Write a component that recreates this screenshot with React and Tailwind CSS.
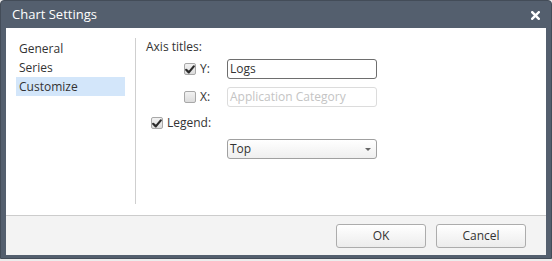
import React from 'react';

// Petite case à cocher grise, comme dans la maquette
function Check({ checked }) {
  return (
    <span className="w-[12px] h-[12px] rounded-[2px] border border-[#a8a8a8] bg-gradient-to-b from-[#f2f2f2] to-[#dcdcdc] flex items-center justify-center shrink-0">
      {checked && (
        <svg width="10" height="9" viewBox="0 0 10 9">
          <path d="M1.2 4.8 L3.8 7.4 L8.8 1.4" fill="none" stroke="#2b2b2b" strokeWidth="2.2" strokeLinecap="round" strokeLinejoin="round" />
        </svg>
      )}
    </span>
  );
}

function App() {
  const menu = ['General', 'Series', 'Customize'];

  return (
    <div className="w-[552px] h-[261px] bg-[#ececec] font-['Open_Sans',sans-serif] text-[12px] text-[#333]">
      <div className="w-[552px] h-[259px] bg-[#545f6e] border border-[#434c58] rounded-t-[4px] px-[5px] pb-[3px] flex flex-col">
        {/* --- BARRE DE TITRE --- */}
        <div className="h-[27px] flex items-center justify-between pl-[6px] pr-[6px] shrink-0">
          <span className="text-[13px] text-white leading-none">Chart Settings</span>
          <svg width="9" height="9" viewBox="0 0 9 9" className="mt-[1px]">
            <path d="M1.2 1.2 L7.8 7.8 M7.8 1.2 L1.2 7.8" stroke="#fff" strokeWidth="2.4" strokeLinecap="square" />
          </svg>
        </div>

        {/* --- CONTENU --- */}
        <div className="flex-1 bg-white flex flex-col">
          <div className="h-[187px] flex px-[10px] pt-[10px] pb-[11px]">
            <div className="w-[109px] pt-[1px] shrink-0">
              {menu.map((m) => (
                <div
                  key={m}
                  className={`h-[19px] leading-[19px] pl-[3px] ${m === 'Customize' ? 'bg-[#d3e6fa]' : ''}`}
                >
                  {m}
                </div>
              ))}
            </div>
            <div className="ml-[10px] border-l border-[#cfcfcf] pl-[10px] flex flex-col">
              <div className="h-[17px] leading-[17px]">Axis titles:</div>

              <div className="mt-[4px] h-[20px] flex items-center">
                <div className="w-[81px] flex items-center pl-[38px]">
                  <Check checked />
                  <span className="ml-[4px]">Y:</span>
                </div>
                <div className="w-[150px] h-[20px] border border-[#6e6e6e] rounded-[3px] px-[2px] leading-[18px]">
                  Logs
                </div>
              </div>

              <div className="mt-[8px] h-[20px] flex items-center">
                <div className="w-[81px] flex items-center pl-[38px]">
                  <Check />
                  <span className="ml-[4px]">X:</span>
                </div>
                <div className="w-[150px] h-[20px] border border-[#dcdcdc] rounded-[3px] px-[2px] leading-[18px] text-[#c4c4c4]">
                  Application Category
                </div>
              </div>

              <div className="mt-[6px] h-[20px] flex items-center pl-[5px]">
                <Check checked />
                <span className="ml-[4px]">Legend:</span>
              </div>

              <div className="mt-[6px] h-[20px] flex pl-[81px]">
                <div className="w-[150px] h-[20px] border border-[#a0a0a0] rounded-[3px] bg-gradient-to-b from-white to-[#efefef] px-[2px] flex items-center justify-between">
                  <span className="leading-[18px]">Top</span>
                  <svg width="6" height="3" viewBox="0 0 6 3" className="mr-[3px]">
                    <path d="M0 0 L6 0 L3 3 Z" fill="#666" />
                  </svg>
                </div>
              </div>
            </div>
          </div>

          {/* --- PIED --- */}
          <div className="flex-1 border-t border-[#cccccc] bg-[#f3f3f3] flex justify-end items-start pt-[8px] pr-[20px] gap-[10px]">
            <button className="w-[90px] h-[24px] border border-[#acacac] rounded-[3px] bg-gradient-to-b from-white to-[#ececec] text-[#333]">
              OK
            </button>
            <button className="w-[90px] h-[24px] border border-[#acacac] rounded-[3px] bg-gradient-to-b from-white to-[#ececec] text-[#333]">
              Cancel
            </button>
          </div>
        </div>
      </div>
    </div>
  );
}

export default App;
